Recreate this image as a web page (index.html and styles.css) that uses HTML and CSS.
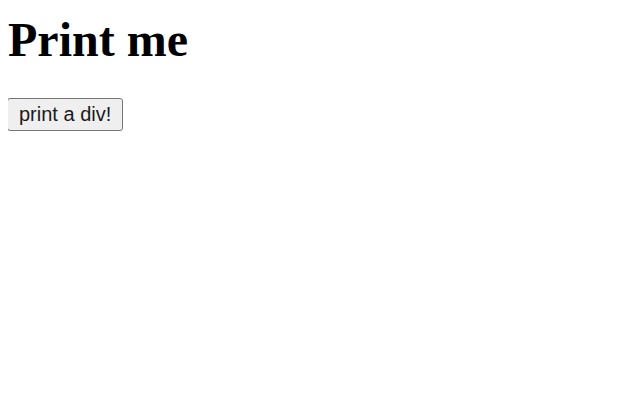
FILE: index.html
```html
<!DOCTYPE html>
<html>
<head>
<meta charset="utf-8">
<link rel="stylesheet" href="styles.css">
</head>
<body class="page">
<h1 class="title">Print me</h1>
<button class="print-btn">print a div!</button>
</body>
</html>
```

FILE: styles.css
```css
.page {
  margin: 8px;
  background: #fff;
  font-family: "Liberation Serif", serif;
}
.title {
  font-family: "Liberation Serif", serif;
  font-size: 48px;
  line-height: 1;
  font-weight: bold;
  margin: 8px 0 34px;
  color: #000;
}
.print-btn {
  font-family: "Liberation Sans", Arial, sans-serif;
  font-size: 20px;
  padding: 4px 11px 4px 11px;
  margin: 0 0 0 -1px;
  border: 1px solid #767676;
  border-radius: 3px;
  background: #efefef;
  color: #1a1a1a;
}
```
